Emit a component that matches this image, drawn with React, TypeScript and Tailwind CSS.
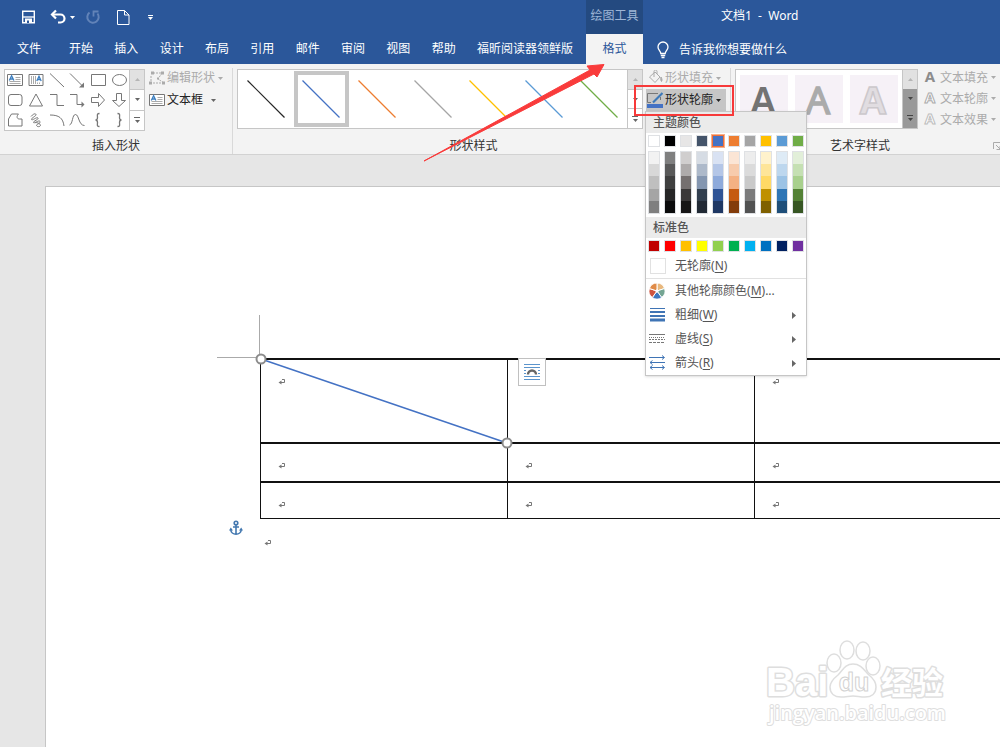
import React from "react";
import { clsx } from "clsx";

const tabs = ["开始", "插入", "设计", "布局", "引用", "邮件", "审阅", "视图", "帮助", "福昕阅读器领鲜版"];

const themeColors: { name: string; base: string; tints: string[] }[] = [
  { name: "白色", base: "bg-[#ffffff]", tints: ["bg-[#f2f2f2]", "bg-[#d8d8d8]", "bg-[#bfbfbf]", "bg-[#a5a5a5]", "bg-[#7f7f7f]"] },
  { name: "黑色", base: "bg-[#000000]", tints: ["bg-[#7f7f7f]", "bg-[#595959]", "bg-[#3f3f3f]", "bg-[#262626]", "bg-[#0c0c0c]"] },
  { name: "浅灰", base: "bg-[#e7e6e6]", tints: ["bg-[#d0cece]", "bg-[#aeabab]", "bg-[#757070]", "bg-[#3a3838]", "bg-[#171616]"] },
  { name: "蓝灰", base: "bg-[#44546a]", tints: ["bg-[#d6dce4]", "bg-[#adb9ca]", "bg-[#8496b0]", "bg-[#323f4f]", "bg-[#222a35]"] },
  { name: "蓝色", base: "bg-[#4472c4]", tints: ["bg-[#d9e2f3]", "bg-[#b4c6e7]", "bg-[#8eaadb]", "bg-[#2f5496]", "bg-[#1f3864]"] },
  { name: "橙色", base: "bg-[#ed7d31]", tints: ["bg-[#fbe5d5]", "bg-[#f7cbac]", "bg-[#f4b183]", "bg-[#c55a11]", "bg-[#833c0b]"] },
  { name: "灰色", base: "bg-[#a5a5a5]", tints: ["bg-[#ededed]", "bg-[#dbdbdb]", "bg-[#c9c9c9]", "bg-[#7b7b7b]", "bg-[#525252]"] },
  { name: "金色", base: "bg-[#ffc000]", tints: ["bg-[#fff2cc]", "bg-[#fee599]", "bg-[#ffd965]", "bg-[#bf9000]", "bg-[#7f6000]"] },
  { name: "浅蓝", base: "bg-[#5b9bd5]", tints: ["bg-[#deebf6]", "bg-[#bdd7ee]", "bg-[#9cc3e5]", "bg-[#2e75b5]", "bg-[#1e4e79]"] },
  { name: "绿色", base: "bg-[#70ad47]", tints: ["bg-[#e2efd9]", "bg-[#c5e0b3]", "bg-[#a8d08d]", "bg-[#538135]", "bg-[#375623]"] },
];

const standardColors = [
  "bg-[#c00000]", "bg-[#ff0000]", "bg-[#ffc000]", "bg-[#ffff00]", "bg-[#92d050]",
  "bg-[#00b050]", "bg-[#00b0f0]", "bg-[#0070c0]", "bg-[#002060]", "bg-[#7030a0]",
];

const lineStyles = ["#262626", "#4472c4", "#ed7d31", "#a5a5a5", "#ffc000", "#5b9bd5", "#70ad47"];

function Icon({ size = 16, className, children }: { size?: number; className?: string; children: React.ReactNode }) {
  return (
    <svg width={size} height={size} viewBox="0 0 16 16" fill="none" stroke="currentColor" className={clsx("shrink-0", className)} aria-hidden="true">
      {children}
    </svg>
  );
}

function Caret({ className }: { className?: string }) {
  return (
    <svg width="5" height="3" viewBox="0 0 5 3" className={clsx("shrink-0", className)} aria-hidden="true">
      <path d="M0 0h5L2.5 3z" fill="currentColor" />
    </svg>
  );
}

function TextBoxGlyph() {
  return (
    <Icon className="text-[#777]">
      <path d="M.5 2.500h15v11H.5z" fill="#fff" />
      <path d="M8.500 5.500h5M8.500 7.500h5M2.500 9.500h11M2.500 11.500h11" stroke="#aaa" />
      <path d="M2.300 8.500 4.600 3.800 6.900 8.500M3.200 7h2.800" stroke="#3c7ebf" strokeWidth="1.300" />
    </Icon>
  );
}

const shapes: { name: string; art: React.ReactNode }[] = [
  { name: "文本框", art: <TextBoxGlyph /> },
  {
    name: "竖排文本框",
    art: (
      <Icon>
        <path d="M1 2.500h14v11H1z" />
        <path d="M3.500 4v8M5.500 4v8M7.500 4v8M9.500 10.500v1.500M11.500 10.500v1.500" stroke="#aaa" />
        <path d="M8.800 9 11 4.300 13.200 9M9.600 7.500h2.800" stroke="#3c7ebf" strokeWidth="1.300" />
      </Icon>
    ),
  },
  { name: "直线", art: <Icon><path d="M1 1.500 15 15" /></Icon> },
  { name: "箭头", art: <Icon><path d="M1 1.500 14 14.500" /><path d="M15 15.500v-5l-5 5z" fill="currentColor" stroke="none" /></Icon> },
  { name: "矩形", art: <Icon><path d="M1.500 2.500h14v11h-14z" /></Icon> },
  { name: "椭圆", art: <Icon><ellipse cx="8.500" cy="8" rx="7" ry="5.500" /></Icon> },
  { name: "圆角矩形", art: <Icon><rect x="1.500" y="2.500" width="13.500" height="11" rx="2.500" /></Icon> },
  { name: "三角形", art: <Icon><path d="M8 2 14.500 14H1.500z" /></Icon> },
  { name: "肘形连接符", art: <Icon><path d="M1 2.500h7v11h7" /></Icon> },
  { name: "肘形箭头", art: <Icon><path d="M1 2.500h7v10h7" /><path d="M15.500 12.500l-3-3v6z" fill="currentColor" stroke="none" /></Icon> },
  { name: "右箭头", art: <Icon><path d="M1.500 5.500h7v-4l6 6.500-6 6.500v-4h-7z" /></Icon> },
  { name: "下箭头", art: <Icon><path d="M5.500 1.500v7h-4l6.500 6 6.500-6h-4v-7z" /></Icon> },
  { name: "任意多边形", art: <Icon><path d="M1.500 14V7l3-5h7c-2 2-2 5 1 5h2.500v7z" /></Icon> },
  { name: "自由曲线", art: <Icon><path d="M3 4.500C5 2 7.500 1 8 2.500S3 6 3.500 7.500 9 4.500 10 6 5 9 5.500 10.500 11 7.500 12 9.500 8 12 8.500 13.500 12 15 12.500 13.500 8 9.500 7 11" /></Icon> },
  { name: "弧形", art: <Icon><path d="M1 3c9 0 13 3 14 11" /></Icon> },
  { name: "曲线", art: <Icon><path d="M.5 13C4 12 3 2.500 6.500 2.500S9.500 13.500 15.500 13.500" /></Icon> },
  { name: "左大括号", art: <Icon><path d="M9.500 1.500c-3 0-2 2-2 4 0 1.500-.5 2.500-2 2.500 1.500 0 2 1 2 2.500 0 2-1 4 2 4" strokeWidth="1.300" /></Icon> },
  { name: "右大括号", art: <Icon><path d="M6.500 1.500c3 0 2 2 2 4 0 1.500.5 2.500 2 2.500-1.500 0-2 1-2 2.500 0 2 1 4-2 4" strokeWidth="1.300" /></Icon> },
];

function GalleryScroll({ dark = false }: { dark?: boolean }) {
  return (
    <div className={clsx("flex w-[15px] shrink-0 flex-col border-l border-[#c6c6c6]", dark ? "bg-[#999] text-[#444]" : "bg-white text-[#666]")}>
      <button aria-label="上一行" className="flex flex-1 items-center justify-center bg-[#e1e1e1] text-[#b5b5b5]">
        <Caret className="rotate-180" />
      </button>
      <button aria-label="下一行" className={clsx("flex flex-1 items-center justify-center", !dark && "border-y border-[#c6c6c6]")}>
        <Caret />
      </button>
      <button aria-label="更多" className="flex flex-1 flex-col items-center justify-center gap-[2px]">
        <span className="h-px w-[6px] bg-current" />
        <Caret />
      </button>
    </div>
  );
}

function GroupLabel({ children }: { children: React.ReactNode }) {
  return <div className="text-center leading-4 text-[#333]">{children}</div>;
}

function Swatch({ color, selected = false, label }: { color: string; selected?: boolean; label: string }) {
  return (
    <button
      aria-label={label}
      className={clsx("size-3 shrink-0 border", color, selected ? "border-[#f07038] outline outline-[#f7b08c]" : "border-[#dfe1e4]")}
    />
  );
}

function MenuHeading({ children }: { children: React.ReactNode }) {
  return <h3 className="bg-[#ebebeb] pl-[7px] font-medium leading-[21px] text-[#555]">{children}</h3>;
}

function MenuItem({ icon, text, hotkey, tail = "", arrow = false }: { icon: React.ReactNode; text: string; hotkey: string; tail?: string; arrow?: boolean }) {
  return (
    <button role="menuitem" className="flex h-6 w-full items-center pl-[3px] pr-[10px] text-[#555]">
      <span className="flex w-[26px] shrink-0 items-center">{icon}</span>
      <span>
        {text}(<u className="underline-offset-2">{hotkey}</u>){tail}
      </span>
      {arrow && (
        <svg width="4" height="7" viewBox="0 0 4 7" className="ml-auto" aria-hidden="true">
          <path d="M0 0l4 3.500L0 7z" fill="#666" />
        </svg>
      )}
    </button>
  );
}

function OutlineMenu() {
  return (
    <div role="menu" aria-label="形状轮廓" className="absolute -left-px top-full z-20 w-[162px] border border-[#c6c6c6] bg-white shadow-sm">
      <MenuHeading>主题颜色</MenuHeading>
      <div className="flex gap-1 px-[2px] pt-[2px]">
        {themeColors.map((c) => (
          <Swatch key={c.name} label={c.name} color={c.base} selected={c.name === "蓝色"} />
        ))}
      </div>
      <div className="mt-1 flex h-[63px] gap-1 px-[2px]">
        {themeColors.map((c) => (
          <div key={c.name} className="flex w-3 shrink-0 flex-col border border-[#dfe1e4]">
            {c.tints.map((t) => (
              <button key={t} aria-label={c.name} className={clsx("flex-1", t)} />
            ))}
          </div>
        ))}
      </div>
      <div className="mt-[3px]">
        <MenuHeading>标准色</MenuHeading>
      </div>
      <div className="flex gap-1 px-[2px] pt-[2px]">
        {standardColors.map((c) => (
          <Swatch key={c} label="标准色" color={c} />
        ))}
      </div>
      <div className="border-b border-[#e1e1e1] pt-[2px]">
        <MenuItem icon={<span className="ml-px size-4 border border-[#e1e1e1] bg-white" />} text="无轮廓" hotkey="N" />
      </div>
      <MenuItem
        text="其他轮廓颜色"
        hotkey="M"
        tail="..."
        icon={
          <Icon className="text-white">
            <path d="M8 8V0a8 8 0 0 1 7.600 5.500z" fill="#e8b87e" />
            <path d="M8 8l7.600-2.500a8 8 0 0 1-2.900 9z" fill="#74a593" />
            <path d="M8 8l4.700 6.500a8 8 0 0 1-9.400 0z" fill="#3c78c0" />
            <path d="M8 8l-4.700 6.500a8 8 0 0 1-2.900-9z" fill="#cf5540" />
            <path d="M8 8L.4 5.500A8 8 0 0 1 8 0z" fill="#e08b48" />
            <circle cx="8" cy="8" r="1.200" fill="#fff" />
          </Icon>
        }
      />
      <MenuItem text="粗细" hotkey="W" arrow icon={<Icon className="text-[#3f74b5]"><path d="M1 1.500h15" /><path d="M1 5h15" strokeWidth="2" /><path d="M1 9h15" strokeWidth="2" /><path d="M1 13h15" strokeWidth="3" /></Icon>} />
      <MenuItem text="虚线" hotkey="S" arrow icon={<Icon className="text-[#777]"><path d="M0 3.500h16" /><path d="M0 6.500h16" strokeDasharray="1 1" /><path d="M0 8.500h16" strokeDasharray="2 1" /><path d="M0 11.500h16" strokeDasharray="3 1" /></Icon>} />
      <MenuItem text="箭头" hotkey="R" arrow icon={<Icon className="text-[#3f74b5]"><path d="M0 2.500h15M1 7.500h15M1 12.500h14M13 .5l2.500 2-2.500 2M3.500 5.500l-2.500 2 2.500 2M3.500 10.500l-2.500 2 2.500 2M13 10.500l2.500 2-2.500 2" /></Icon>} />
    </div>
  );
}

function ShapeMenus() {
  const row = "flex h-[22px] w-20 items-center gap-[2px] pl-px";
  return (
    <div className="-mt-[2px] ml-[3px] flex flex-col">
      <button className={clsx(row, "text-[#ababab]")}>
        <Icon><path d="M2.500 7 8 2l5 5-5 5.500z" /><path d="M7 7V1.500C7-.5 10-.5 10 1.500V4" /><path d="M14 7c1 2 1.500 3 .5 4.500-1-1.500-1-2.500-.5-4.500z" fill="currentColor" /></Icon>
        形状填充
        <Caret className="ml-px" />
      </button>
      <div className="relative">
        <button aria-expanded="true" className={clsx(row, "bg-[#c6c6c6] text-[#222]")}>
          <Icon>
            <path d="M11 1.500H.5v9h3.500M13.500 5v3" stroke="#777" />
            <path d="M6 10.500 15.500 1" stroke="#3c78b8" strokeWidth="2.200" />
            <path d="M0 14h16" stroke="#4472c4" strokeWidth="4" />
          </Icon>
          形状轮廓
          <Caret className="ml-px" />
        </button>
        <OutlineMenu />
        <div className="pointer-events-none absolute -left-3 -top-1 z-30 h-[31px] w-[100px] border-2 border-[#f73a3a]" />
      </div>
    </div>
  );
}

function TextMenus() {
  const items = [
    { label: "文本填充", fill: "#8c8c8c", stroke: "none" },
    { label: "文本轮廓", fill: "#ffffff", stroke: "#ababab" },
    { label: "文本效果", fill: "#ffffff", stroke: "#bdbdbd" },
  ];
  return (
    <div className="-mt-[2px] ml-1 flex shrink-0 flex-col">
      {items.map((i) => (
        <button key={i.label} className="flex h-[22px] items-center gap-[2px] whitespace-nowrap text-[#ababab]">
          <svg width="16" height="16" viewBox="0 0 16 16" className="shrink-0" aria-hidden="true">
            <text x="8" y="12" textAnchor="middle" fontFamily="Noto Sans, sans-serif" fontWeight="700" fontSize="15" fill={i.fill} stroke={i.stroke}>A</text>
          </svg>
          {i.label}
          <Caret className="ml-px" />
        </button>
      ))}
    </div>
  );
}

function Ribbon() {
  return (
    <div className="flex h-[91px] border-b border-[#d2d2d2] bg-[#f3f3f3] pt-1">
      <section className="flex w-[233px] shrink-0 flex-col border-r border-[#d9d9d9] pl-1">
        <div className="flex pt-px">
          <div className="flex h-[62px] w-[141px] shrink-0 border border-[#c6c6c6] bg-white">
            <div className="grid flex-1 grid-cols-6 text-[#777]">
              {shapes.map((s) => (
                <button key={s.name} aria-label={s.name} className="flex items-center justify-center">
                  {s.art}
                </button>
              ))}
            </div>
            <GalleryScroll />
          </div>
          <div className="-mt-[2px] ml-1 flex flex-col">
            <button className="flex h-[22px] items-center gap-[2px] text-[#ababab]">
              <Icon>
                <path d="M4 3h9M13 3 9 9l6 4M2 6v7M4 13h9" strokeDasharray="2 1" />
                <path d="M2 1.500h3v3H2zM12 1.500h3v3h-3zM0 11.500h3v3H0zM8 7.500h2v2H8zM13 11.500h3v3h-3z" fill="currentColor" stroke="none" />
              </Icon>
              编辑形状
              <Caret className="ml-px" />
            </button>
            <button className="flex h-[22px] items-center gap-[2px] text-[#222]">
              <TextBoxGlyph />
              文本框
              <Caret className="ml-[6px] text-[#666]" />
            </button>
          </div>
        </div>
        <div className="mt-auto pr-1">
          <GroupLabel>插入形状</GroupLabel>
        </div>
      </section>

      <section className="flex shrink-0 flex-col border-r border-[#d9d9d9] pl-1 pr-1">
        <div className="flex h-[62px] pt-px">
          <div className="flex h-[60px] w-[406px] border border-[#c6c6c6] bg-white">
            <div className="flex flex-1">
              {lineStyles.map((color, i) => (
                <button
                  key={color}
                  aria-label={`线条样式 ${i + 1}`}
                  className={clsx("my-px flex flex-1 items-center justify-center border-4", i === 1 ? "border-[#c6c6c6]" : "border-transparent")}
                >
                  <svg width="38" height="38" viewBox="0 0 38 38" className="shrink-0" aria-hidden="true">
                    <path d="M.5.500l37 37" stroke={color} strokeWidth="1.200" />
                  </svg>
                </button>
              ))}
            </div>
            <GalleryScroll />
          </div>
          <ShapeMenus />
        </div>
        <div className="mt-auto pr-4">
          <GroupLabel>形状样式</GroupLabel>
        </div>
      </section>

      <section className="flex min-w-0 flex-1 flex-col pl-1">
        <div className="flex h-[62px] pt-px">
          <div className="flex h-[60px] w-[183px] shrink-0 border border-[#c6c6c6] bg-white">
            <div className="flex flex-1 items-center justify-between px-1">
              {[
                { fill: "#737373", stroke: "none", weight: 600 },
                { fill: "#ababab", stroke: "#ababab", weight: 400 },
                { fill: "#e1dde1", stroke: "#ccc8cc", weight: 700 },
              ].map((a) => (
                <button key={a.fill} aria-label="艺术字" className="bg-[#f6f1f7]">
                  <svg width="48" height="48" viewBox="0 0 48 48" aria-hidden="true">
                    <text x="23" y="39" textAnchor="middle" fontFamily="Noto Sans, sans-serif" fontSize="38" fontWeight={a.weight} fill={a.fill} stroke={a.stroke} strokeWidth="1.500">A</text>
                  </svg>
                </button>
              ))}
            </div>
            <GalleryScroll dark />
          </div>
          <TextMenus />
        </div>
        <div className="mt-auto flex items-center">
          <div className="flex-1 pr-2">
            <GroupLabel>艺术字样式</GroupLabel>
          </div>
          <button aria-label="艺术字样式设置" className="text-[#aaa]">
            <svg width="7" height="8" viewBox="0 0 7 8" fill="none" stroke="currentColor" aria-hidden="true">
              <path d="M.5 7V.5H7M3 3l4 4M7 4v3.500H3.500" />
            </svg>
          </button>
        </div>
      </section>
    </div>
  );
}

function TitleBar() {
  return (
    <header className="bg-[#2b579a] text-white">
      <div className="flex h-[34px]">
        <div className="flex w-[586px] shrink-0 items-center pl-5 text-white">
          <button aria-label="保存">
            <Icon>
              <path d="M2.700 2.200h11.600v11.600H2.700z" strokeWidth="1.400" />
              <path d="M3 8h11" strokeWidth="1.300" />
              <path d="M5 9.500h7V14H5z" fill="currentColor" stroke="none" />
              <path d="M7 11.500h2V14H7z" fill="#2b579a" stroke="none" />
            </Icon>
          </button>
          <button aria-label="撤消" className="ml-[14px] flex items-center gap-1">
            <Icon>
              <path d="M2 5.500h8.500a4 4 0 0 1 0 8H8" strokeWidth="2.200" />
              <path d="M6 1.500 2 5.500l4 4" strokeWidth="2.200" />
            </Icon>
            <Caret />
          </button>
          <button aria-label="重复" className="ml-[10px] text-[#6283b8]">
            <Icon>
              <path d="M4.500 3.500A5.700 5.700 0 1 0 12.500 4.500" strokeWidth="2" />
              <path d="M8.500 7.500v-5h5" strokeWidth="1.800" />
            </Icon>
          </button>
          <button aria-label="新建" className="ml-[14px]">
            <Icon>
              <path d="M2.500 1.500h7L14 6v9.500H2.500zM9.500 1.500V6H14" />
            </Icon>
          </button>
          <button aria-label="自定义快速访问工具栏" className="ml-[17px] flex flex-col items-center gap-px">
            <span className="h-px w-[5px] bg-white" />
            <Caret />
          </button>
        </div>
        <div className="flex w-[57px] shrink-0 items-center justify-center whitespace-nowrap bg-[#244a80] pb-[2px] text-[#9fb6d6]">绘图工具</div>
        <h1 className="whitespace-pre pl-[78px] pt-[7px] leading-[18px]">文档1  -  Word</h1>
      </div>
      <div className="flex h-[30px] items-stretch">
        <button className="w-[58px] shrink-0">文件</button>
        <nav className="ml-[11px] flex w-[504px] shrink-0 justify-between">
          {tabs.map((t) => (
            <button key={t} className="whitespace-nowrap">
              {t}
            </button>
          ))}
        </nav>
        <button className="ml-[13px] w-[57px] shrink-0 bg-[#f3f3f3] text-[#2b579a]">格式</button>
        <button className="ml-3 flex items-center gap-2 whitespace-nowrap pt-px">
          <svg width="16" height="18" viewBox="0 0 16 18" fill="none" stroke="currentColor" strokeWidth="1.300" aria-hidden="true">
            <path d="M5.800 12.500C5.800 10 3 9 3 6a5 5 0 0 1 10 0c0 3-2.800 4-2.800 6.500zM5.800 14.500h4.400M6.500 16.500h3" />
          </svg>
          告诉我你想要做什么
        </button>
      </div>
    </header>
  );
}

function ReturnMark() {
  return (
    <svg width="8" height="8" viewBox="0 0 8 8" fill="none" stroke="#777" aria-hidden="true">
      <path d="M4 1.500h2.500v3H2" />
      <path d="M3.500 2.500v4L.5 4.500z" fill="#777" stroke="none" />
    </svg>
  );
}

function DocumentTable() {
  const rows = [
    { height: "h-[84px]", marks: [true, false, true, true] },
    { height: "h-[39px]", marks: [true, true, true, true] },
    { height: "h-[38px]", marks: [true, true, true, true] },
  ];
  return (
    <table className="w-[988px] table-fixed border-separate border-spacing-0">
      <tbody>
        {rows.map((r, ri) => (
          <tr key={ri}>
            {r.marks.map((m, ci) => (
              <td key={ci} className={clsx("border-l border-t-2 border-[#111] pl-[17px] pt-[18px] align-top", r.height, ri === 2 && "border-b")}>
                {m && <ReturnMark />}
              </td>
            ))}
          </tr>
        ))}
      </tbody>
    </table>
  );
}

function Watermark() {
  return (
    <svg width="190" height="96" viewBox="0 0 190 96" className="absolute bottom-[15px] right-[46px]" fill="#fff" stroke="#dedede" strokeLinejoin="round" aria-label="Baidu 经验">
      <g fontWeight="700" paintOrder="stroke" strokeWidth="3">
        <text x="2" y="60" fontSize="40" fontFamily="Liberation Sans, sans-serif">Bai</text>
        <text x="117" y="58" fontSize="31" fontFamily="Noto Sans CJK SC, sans-serif">经验</text>
        <text x="5" y="84" fontSize="20" fontWeight="600" strokeWidth="2" fontFamily="Open Sans, sans-serif">jingyan.baidu.com</text>
      </g>
      <g strokeWidth="1.500">
        <ellipse cx="70" cy="27" rx="7" ry="9" />
        <ellipse cx="83" cy="14" rx="7" ry="9" />
        <ellipse cx="99" cy="15" rx="7" ry="9" />
        <ellipse cx="109" cy="30" rx="7" ry="9" />
        <path d="M89 28c8 0 11 6 16 11 5 4 7 8 7 12 0 7-5 10-11 10-5 0-8-1-12-1s-7 1-12 1c-6 0-11-3-11-10 0-4 3-8 8-12 5-5 7-11 15-11z" />
      </g>
      <text x="90" y="55" textAnchor="middle" fontSize="25" fontWeight="700" stroke="#d2d2d2" fontFamily="Liberation Sans, sans-serif">du</text>
    </svg>
  );
}

export default function App() {
  return (
    <div className="relative flex min-h-screen flex-col overflow-hidden bg-[#e6e6e6] text-xs [font-family:'Noto_Sans','Noto_Sans_CJK_SC',sans-serif]">
      <TitleBar />
      <Ribbon />
      <main className="relative ml-[45px] mt-[31px] flex-1 overflow-hidden border-l border-t border-[#c6c6c6] bg-white pl-[214px] pt-[171px]">
        <div className="relative">
          <DocumentTable />
          <svg width="300" height="140" viewBox="0 0 300 140" className="absolute -left-[44px] -top-[44px]" fill="none" aria-hidden="true">
            <path d="M1 43.500h42M43.500 1v42" stroke="#aaa" />
            <path d="M45 45 291 129" stroke="#4472c4" strokeWidth="1.500" />
            <circle cx="45" cy="45" r="4.500" fill="#fff" stroke="#8c8c8c" strokeWidth="2" />
            <circle cx="291" cy="129" r="4.500" fill="#fff" stroke="#8c8c8c" strokeWidth="2" />
          </svg>
          <button aria-label="布局选项" className="absolute left-[258px] top-0 flex size-7 items-center justify-center border border-[#c0c0c0] bg-white">
            <Icon>
              <path d="M0 .500h16M0 3.500h16M0 12.500h16M0 15.500h16M0 6.500h2M14 6.500h2M0 9.500h2M14 9.500h2" stroke="#5b94cc" />
              <path d="M4 10.500a4 4 0 0 1 8 0" stroke="#666" strokeWidth="2.400" />
            </Icon>
          </button>
          <svg width="14" height="16" viewBox="0 0 14 16" className="absolute -left-[31px] top-[162px]" fill="none" stroke="#4378b0" strokeWidth="1.600" aria-hidden="true">
            <circle cx="7" cy="3" r="1.800" />
            <path d="M7 5v9M4 7h6M1.800 9.500c0 3 2.500 4.700 5.200 4.700s5.200-1.700 5.200-4.700" />
            <path d="M0 10.500 1.800 7.500 4 10.500zM10 10.500l2.200-3 1.800 3z" fill="#4378b0" stroke="none" />
          </svg>
        </div>
        <div className="pl-1 pt-5">
          <ReturnMark />
        </div>
        <Watermark />
      </main>
      <svg width="182" height="98" viewBox="0 0 182 98" className="pointer-events-none absolute left-[423px] top-16 z-30" aria-hidden="true">
        <path d="M1 97 167 6l-3-4 17-1.500L174 13l-3-3z" fill="#f93b3b" stroke="#f93b3b" strokeLinejoin="round" />
      </svg>
    </div>
  );
}
